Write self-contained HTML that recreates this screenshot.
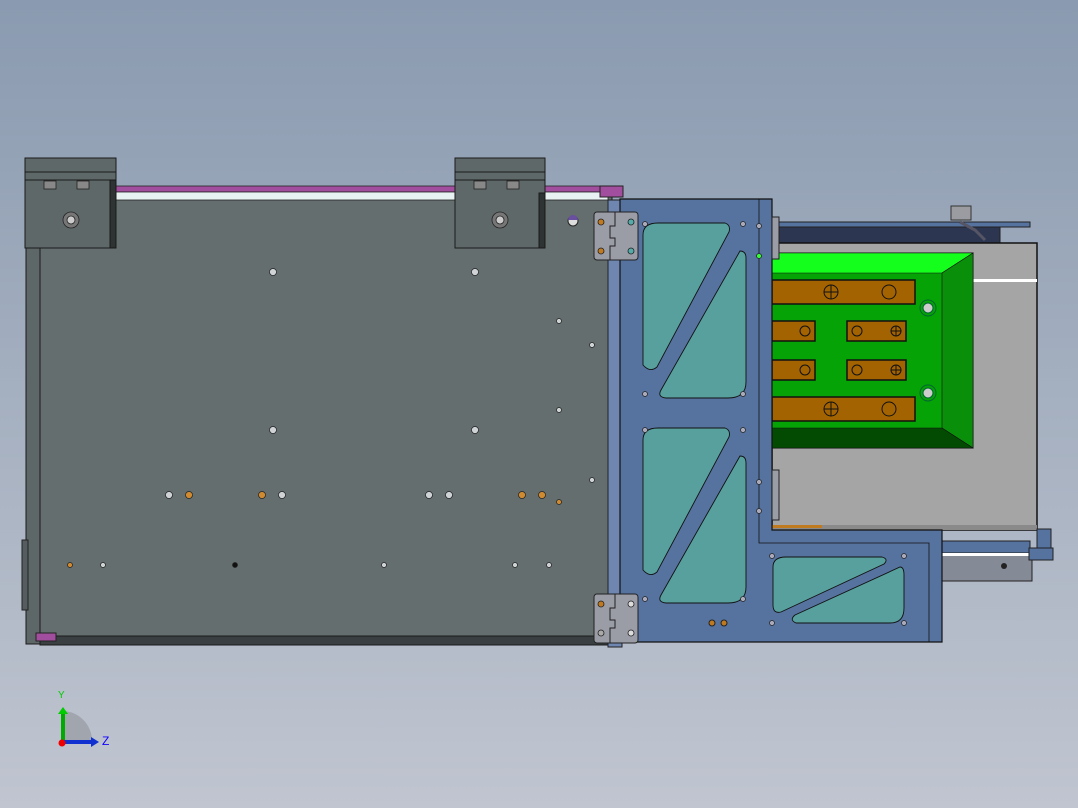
<!DOCTYPE html>
<html><head><meta charset="utf-8"><style>
html,body{margin:0;padding:0;width:1078px;height:808px;overflow:hidden}
body{background:linear-gradient(#8a9ab0 0%,#a5b0c0 50%,#c0c5d0 100%)}
svg{position:absolute;left:0;top:0}
</style></head><body>
<svg width="1078" height="808" viewBox="0 0 1078 808" font-family="Liberation Sans, sans-serif">
<!-- left frame -->
<rect x="26" y="240" width="18" height="404" fill="#5d6767" stroke="#1a1a1a"/>
<rect x="22" y="540" width="6" height="70" fill="#555d60" stroke="#222"/>
<!-- main panel -->
<rect x="40" y="197" width="572" height="443" fill="#646e6e" stroke="#1a1a1a"/>
<rect x="40" y="636" width="572" height="9" fill="#3a4042" stroke="#1a1a1a"/>
<rect x="36" y="633" width="20" height="8" fill="#a24e9f" stroke="#222"/>
<!-- top rod -->
<rect x="116" y="186" width="492" height="6" fill="#a24e9f" stroke="#222" stroke-width=".8"/>
<rect x="116" y="192" width="492" height="8" fill="#e9f2f2" stroke="#222" stroke-width=".8"/>
<rect x="600" y="186" width="23" height="11" fill="#a24e9f" stroke="#222"/>
<!-- blocks -->
<g stroke="#1a1a1a" fill="#5f6868">
<rect x="25" y="158" width="91" height="14"/><rect x="25" y="172" width="91" height="8"/><rect x="25" y="180" width="91" height="68"/>
<rect x="110" y="180" width="6" height="68" fill="#2e3333"/>
<rect x="455" y="158" width="90" height="14"/><rect x="455" y="172" width="90" height="8"/><rect x="455" y="180" width="90" height="68"/>
<rect x="539" y="193" width="6" height="55" fill="#2e3333"/>
</g>
<g fill="#888" stroke="#222" stroke-width=".8">
<rect x="44" y="181" width="12" height="8"/><rect x="77" y="181" width="12" height="8"/>
<rect x="474" y="181" width="12" height="8"/><rect x="507" y="181" width="12" height="8"/>
<circle cx="71" cy="220" r="8" fill="#777"/><circle cx="71" cy="220" r="4" fill="#ccc"/>
<circle cx="500" cy="220" r="8" fill="#777"/><circle cx="500" cy="220" r="4" fill="#ccc"/>
</g>
<circle cx="573" cy="221" r="5" fill="#ddd" stroke="#222"/><path d="M568 220 A5 5 0 0 1 578 220Z" fill="#6a4fa0"/>
<!-- holes -->
<g fill="#cfd3d5" stroke="#222" stroke-width=".7">
<circle cx="273" cy="272" r="3.5"/><circle cx="475" cy="272" r="3.5"/>
<circle cx="273" cy="430" r="3.5"/><circle cx="475" cy="430" r="3.5"/>
<circle cx="169" cy="495" r="3.5"/><circle cx="282" cy="495" r="3.5"/><circle cx="429" cy="495" r="3.5"/><circle cx="449" cy="495" r="3.5"/>
<circle cx="103" cy="565" r="2.5"/><circle cx="384" cy="565" r="2.5"/><circle cx="515" cy="565" r="2.5"/><circle cx="549" cy="565" r="2.5"/>
<circle cx="559" cy="321" r="2.5"/><circle cx="559" cy="410" r="2.5"/><circle cx="592" cy="345" r="2.5"/><circle cx="592" cy="480" r="2.5"/>
</g>
<g fill="#d08a30" stroke="#222" stroke-width=".7">
<circle cx="189" cy="495" r="3.5"/><circle cx="262" cy="495" r="3.5"/><circle cx="522" cy="495" r="3.5"/><circle cx="542" cy="495" r="3.5"/>
<circle cx="559" cy="502" r="2.5"/><circle cx="70" cy="565" r="2.5"/><circle cx="235" cy="565" r="2.5" fill="#111"/>
</g>
<!-- strip between panel and frame -->
<rect x="608" y="200" width="14" height="447" fill="#6f87b0" stroke="#222"/>
<!-- dark band behind green -->
<rect x="772" y="222" width="258" height="5" fill="#5673a0" stroke="#222"/>
<rect x="772" y="227" width="228" height="16" fill="#2d3650" stroke="#222"/>
<rect x="951" y="206" width="20" height="14" fill="#9a9ca2" stroke="#333"/>
<path d="M960 222 L975 230 L985 240" stroke="#556" stroke-width="3" fill="none"/>
<!-- gray box -->
<rect x="772" y="243" width="265" height="287" fill="#a5a5a5" stroke="#111" stroke-width="1.5"/>
<rect x="973" y="279" width="64" height="3" fill="#fff"/>
<rect x="772" y="525" width="265" height="5" fill="#8a8a8a"/>
<rect x="772" y="525" width="50" height="3" fill="#c07a20"/>
<!-- rail -->
<rect x="1037" y="529" width="14" height="20" fill="#5673a0" stroke="#222"/>
<rect x="940" y="541" width="90" height="14" fill="#5673a0" stroke="#222"/>
<rect x="940" y="553" width="92" height="28" fill="#858b96" stroke="#222"/>
<rect x="940" y="553" width="92" height="3" fill="#fff"/>
<rect x="1029" y="548" width="24" height="12" fill="#5673a0" stroke="#222"/>
<circle cx="1004" cy="566" r="3" fill="#222"/>
<!-- green -->
<rect x="772" y="253" width="201" height="195" fill="#05a305" stroke="#111"/>
<path d="M772 253 H973 L942 273 H772Z" fill="#14ff1c" stroke="#111" stroke-width=".6"/>
<path d="M942 273 L973 253 V448 L942 428Z" fill="#0a8f0a" stroke="#111" stroke-width=".6"/>
<path d="M772 428 H942 L973 448 H772Z" fill="#034a03" stroke="#111" stroke-width=".6"/>
<g fill="#a36300" stroke="#111" stroke-width="1.5">
<rect x="772" y="280" width="143" height="24"/><rect x="772" y="321" width="43" height="20"/><rect x="847" y="321" width="59" height="20"/>
<rect x="772" y="360" width="43" height="20"/><rect x="847" y="360" width="59" height="20"/><rect x="772" y="397" width="143" height="24"/>
</g>
<g fill="none" stroke="#111">
<circle cx="831" cy="292" r="7"/><circle cx="889" cy="292" r="7"/><circle cx="831" cy="409" r="7"/><circle cx="889" cy="409" r="7"/>
<circle cx="805" cy="331" r="5"/><circle cx="857" cy="331" r="5"/><circle cx="896" cy="331" r="5"/>
<circle cx="805" cy="370" r="5"/><circle cx="857" cy="370" r="5"/><circle cx="896" cy="370" r="5"/>
<path d="M824 292h14M831 285v14M824 409h14M831 402v14M891 331h10M896 326v10M891 370h10M896 365v10"/>
</g>
<g stroke="#063" fill="#ccc"><circle cx="928" cy="308" r="8" fill="none"/><circle cx="928" cy="308" r="5"/><circle cx="928" cy="393" r="8" fill="none"/><circle cx="928" cy="393" r="5"/></g>
<!-- blue frame -->
<path d="M620 199 H772 V530 H942 V642 H620Z" fill="#5673a0" stroke="#111" stroke-width="1.2"/>
<path d="M759 199 V543 H929 V642" fill="none" stroke="#111" stroke-width=".8"/>
<g fill="#58a09e" stroke="#111" stroke-width=".9">
<path d="M643 235 Q643 223 658 223 L725 223 Q731 225 729 232 L657 367 Q650 373 643 365Z"/>
<path d="M740 251 Q746 251 746 258 L746 382 Q746 398 728 398 L666 398 Q657 397 661 390Z"/>
<path d="M643 440 Q643 428 658 428 L725 428 Q731 430 729 437 L657 572 Q650 578 643 570Z"/>
<path d="M740 456 Q746 456 746 463 L746 587 Q746 603 728 603 L666 603 Q657 602 661 595Z"/>
<path d="M773 567 Q773 557 786 557 L882 557 Q889 559 884 564 L781 612 Q773 614 773 605Z"/>
<path d="M900 567 Q904 567 904 575 L904 608 Q904 623 890 623 L796 623 Q789 620 795 615Z"/>
</g>
<g fill="#aab" stroke="#222" stroke-width=".7">
<circle cx="645" cy="224" r="2.5"/><circle cx="743" cy="224" r="2.5"/><circle cx="645" cy="394" r="2.5"/><circle cx="743" cy="394" r="2.5"/>
<circle cx="645" cy="430" r="2.5"/><circle cx="743" cy="430" r="2.5"/><circle cx="645" cy="599" r="2.5"/><circle cx="743" cy="599" r="2.5"/>
<circle cx="772" cy="556" r="2.5"/><circle cx="904" cy="556" r="2.5"/><circle cx="772" cy="623" r="2.5"/><circle cx="904" cy="623" r="2.5"/>
<circle cx="759" cy="226" r="2.5"/><circle cx="759" cy="482" r="2.5"/><circle cx="759" cy="511" r="2.5"/>
</g>
<circle cx="759" cy="256" r="2.5" fill="#3f3" stroke="#222" stroke-width=".7"/>
<circle cx="712" cy="623" r="3" fill="#c07a20" stroke="#222"/><circle cx="724" cy="623" r="3" fill="#c07a20" stroke="#222"/>
<rect x="772" y="217" width="7" height="42" fill="#9a9ca6" stroke="#222"/>
<rect x="772" y="470" width="7" height="50" fill="#9a9ca6" stroke="#222"/>
<!-- hinges -->
<g stroke="#222" fill="#9a9ca6">
<rect x="594" y="212" width="44" height="48" rx="3"/>
<rect x="594" y="594" width="44" height="49" rx="3"/>
<path d="M615 212 V226 H610 V238 H615 V246 H610 V260 M615 594 V608 H610 V620 H615 V628 H610 V643" fill="none"/>
</g>
<g stroke="#222" stroke-width=".8">
<circle cx="601" cy="222" r="3" fill="#c07a20"/><circle cx="601" cy="251" r="3" fill="#c07a20"/><circle cx="631" cy="222" r="3" fill="#5aa"/><circle cx="631" cy="251" r="3" fill="#5aa"/>
<circle cx="601" cy="604" r="3" fill="#c07a20"/><circle cx="601" cy="633" r="3" fill="#aaa"/><circle cx="631" cy="604" r="3" fill="#ddd"/><circle cx="631" cy="633" r="3" fill="#ddd"/>
</g>
<!-- axes -->
<path d="M62 741 V711 A30 30 0 0 1 92 741Z" fill="#9a9ea6" opacity=".8"/>
<rect x="61" y="713" width="4" height="28" fill="#0a0"/><path d="M58 714 L63 707 L68 714Z" fill="#0c0"/>
<rect x="62" y="740" width="30" height="4" fill="#1030d0"/><path d="M91 737 L99 742 L91 747Z" fill="#1030d0"/>
<circle cx="62" cy="743" r="3.5" fill="#e00"/>
<text x="58" y="698" font-size="10" fill="#0c0">Y</text>
<text x="102" y="745" font-size="12" fill="#10f">Z</text>
</svg>
</body></html>
